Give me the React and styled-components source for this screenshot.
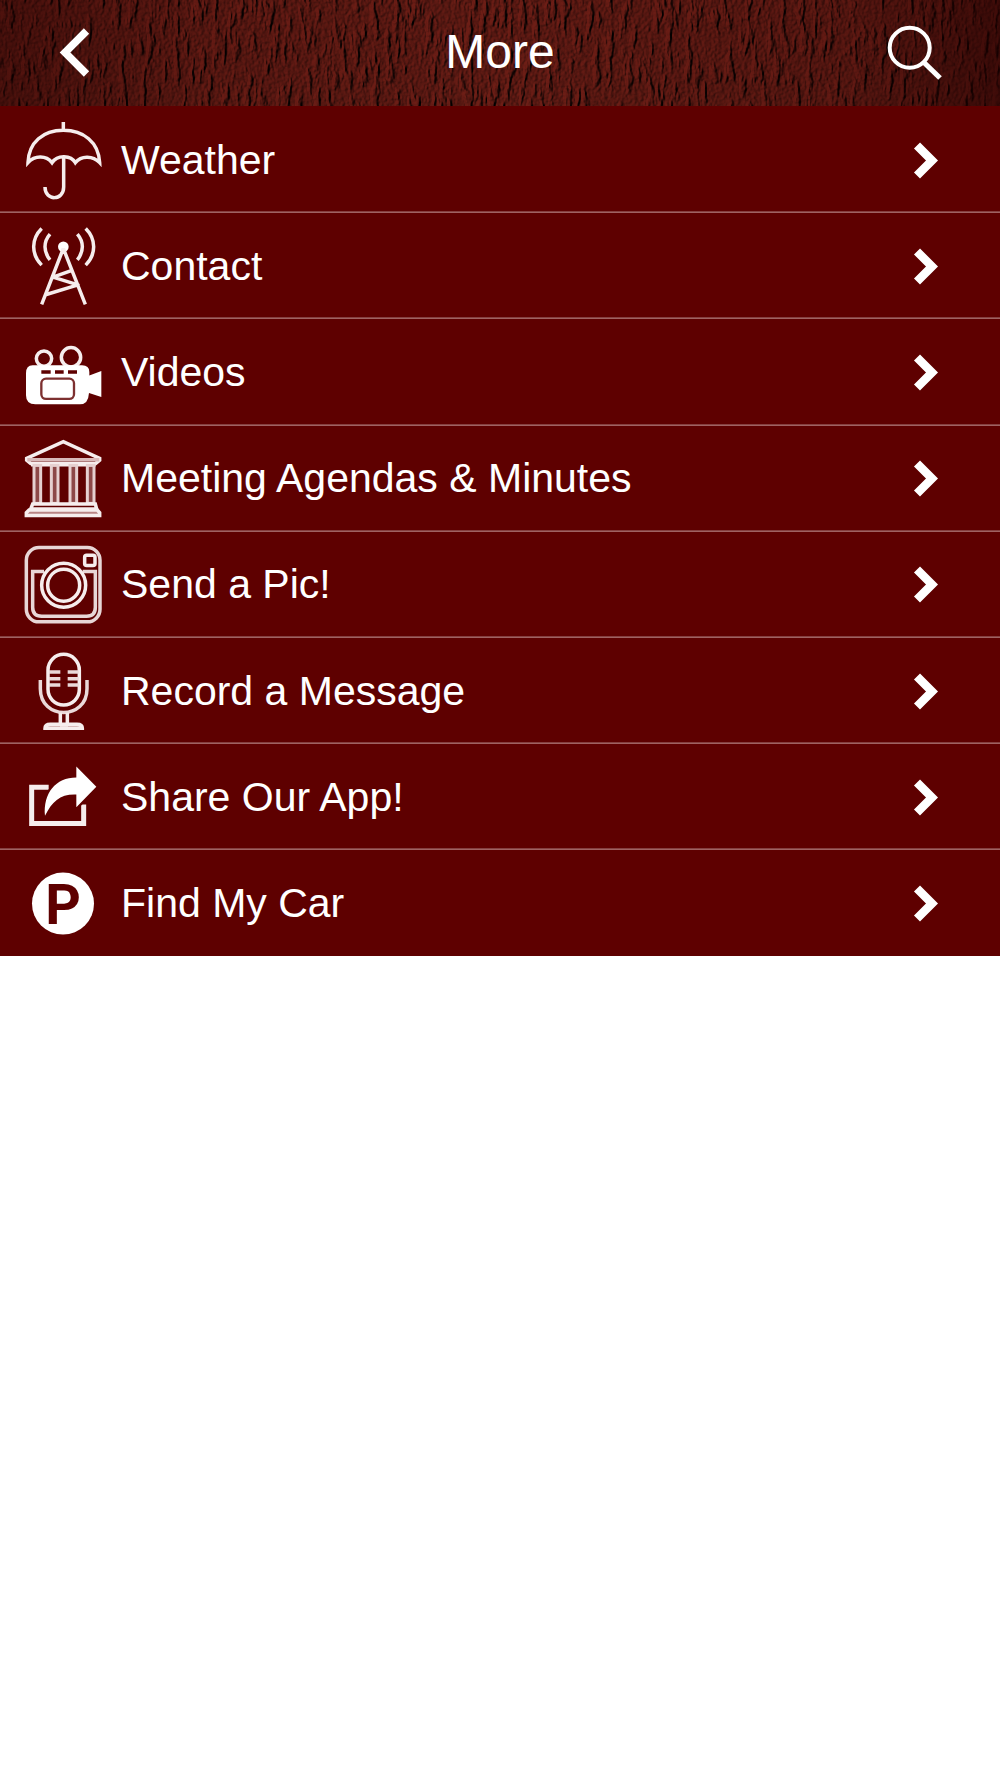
import React from "react";
import styled, { createGlobalStyle } from "styled-components";

const GlobalStyle = createGlobalStyle`
  body {
    margin: 0;
    background: #fff;
    font-family: "Liberation Sans", Arial, Helvetica, sans-serif;
  }
`;

const Page = styled.div`
  width: 100%;
  min-height: 100vh;
  background: #fff;
`;

const Header = styled.header`
  position: relative;
  display: flex;
  align-items: center;
  justify-content: space-between;
  height: 106px;
  padding: 0 56px;
  box-sizing: border-box;
  overflow: hidden;
  background: #4c110d;
`;

const Texture = styled.svg`
  position: absolute;
  inset: 0;
  width: 100%;
  height: 100%;
`;

const Title = styled.h1`
  position: relative;
  margin: 0;
  padding-bottom: 2px;
  color: #fff;
  font-size: 48px;
  font-weight: 400;
  line-height: 56px;
`;

const HeaderButton = styled.button`
  position: relative;
  display: flex;
  width: 60px;
  height: 60px;
  padding: 0;
  border: 0;
  background: none;

  svg {
    width: 60px;
    height: 60px;
  }
`;

const List = styled.ul`
  margin: 0;
  padding: 1px 0 0;
  list-style: none;
  background: #5e0000;
`;

const Row = styled.li`
  display: flex;
  align-items: center;
  height: 106.2px;
  padding: 0 60px 0 23px;
  box-sizing: border-box;
  border-bottom: 1px solid #a06262;
  box-shadow: inset 0 -1px 0 #853f3f;

  &:last-child {
    height: 105.6px;
    border-bottom: 0;
    box-shadow: none;
  }
`;

const RowIcon = styled.svg`
  flex: none;
  width: 80px;
  height: 80px;
  fill: none;
  stroke: #f6eded;
  stroke-width: 10.5;
`;

const Label = styled.span`
  flex: 1;
  padding-left: 18px;
  color: #fff;
  font-size: 41px;
  line-height: 48px;
  white-space: nowrap;
`;

const Chevron = styled.svg`
  flex: none;
  width: 27px;
  height: 40px;
  margin-top: 2px;
`;

const HeaderTexture = () => (
  <Texture aria-hidden="true">
    <defs>
      <filter id="plaster" x="0" y="0" width="100%" height="100%" colorInterpolationFilters="sRGB">
        <feTurbulence type="fractalNoise" baseFrequency="0.15 0.035" numOctaves="4" seed="8" />
        <feColorMatrix values="0 0 0 0 0  0 0 0 0 0  0 0 0 0 0  7 0 0 0 -3.8" result="ridges" />
        <feTurbulence type="fractalNoise" baseFrequency="0.3" numOctaves="2" seed="3" />
        <feColorMatrix values="0 0 0 0 0  0 0 0 0 0  0 0 0 0 0  1 0 0 0 0" result="grain" />
        <feComposite in="ridges" in2="grain" operator="arithmetic" k2="0.5" k3="0.5" />
        <feGaussianBlur stdDeviation="0.7" />
        <feDiffuseLighting surfaceScale="2.3" diffuseConstant="1.15" lightingColor="#601a13">
          <feDistantLight azimuth="200" elevation="52" />
        </feDiffuseLighting>
      </filter>
      <linearGradient id="shade">
        <stop offset="0" stopColor="#200" stopOpacity="0.4" />
        <stop offset="0.2" stopColor="#200" stopOpacity="0.1" />
        <stop offset="0.5" stopColor="#200" stopOpacity="0" />
        <stop offset="0.85" stopColor="#200" stopOpacity="0.15" />
        <stop offset="1" stopColor="#200" stopOpacity="0.6" />
      </linearGradient>
    </defs>
    <rect width="100%" height="100%" filter="url(#plaster)" />
    <rect width="100%" height="100%" fill="url(#shade)" />
  </Texture>
);

const Umbrella = () => (
  <RowIcon viewBox="69 40 240 240">
    <path d="M190 46v22M84 168C86 106 130 71 190 71s106 35 109 97c-20-21-55-23-73 0-13-22-53-25-70 0-18-23-52-22-72 0z" />
    <path d="M191 152v89c0 42-56 43-56 0" />
  </RowIcon>
);

const Tower = () => (
  <RowIcon viewBox="69 40.6 240 240">
    <circle cx="190" cy="103" r="16" fill="#fff" stroke="none" />
    <path d="M190 108l-65 168M190 108l66 168M218 173l-59 21 75 23-95 29" strokeLinejoin="round" />
    <path d="M125 48c-32 32-32 78 0 110M150 65c-20 23-20 53 0 77M232 65c20 23 20 53 0 77M257 48c32 32 32 78 0 110" />
  </RowIcon>
);

const LensFrame = styled.rect`
  stroke: #7d3030;
  stroke-width: 7;
`;

const Camera = () => (
  <RowIcon viewBox="69 41.2 240 240">
    <circle cx="132" cy="121" r="23" />
    <circle cx="213" cy="117" r="29" />
    <path
      d="M98 141h148q22 0 22 20v11l36-14v78l-37-12q-2 34-27 34H106q-28 0-28-27v-66q0-24 20-24z"
      fill="#fff"
      stroke="none"
    />
    <path d="M124 161h28M165 161h26M204 161h27" stroke="#5e0000" />
    <LensFrame x="124" y="181" width="98" height="61" rx="14" />
  </RowIcon>
);

const Column = styled.rect`
  fill: #8d4848;
  stroke: #e6d0d0;
  stroke-width: 9;
`;

const Building = () => (
  <RowIcon viewBox="69 41.8 240 240">
    <path d="M80 103L190 53l109 50v5l-12 10H92l-12-10z" />
    <path d="M82 107h216" stroke="#d9baba" />
    <path d="M93 122h194" />
    {[102, 154, 210, 262].map(x => (
      <Column key={x} x={x} y="124" width="20" height="114" />
    ))}
    <path d="M98 240h188l4 15H92z" />
    <path d="M87 258h205l7 8v8H79v-8z" fill="#b98585" />
  </RowIcon>
);

const PhotoCamera = () => (
  <RowIcon viewBox="69 42.4 240 240">
    <rect x="79" y="53" width="221" height="223" rx="38" stroke="#e8d6d6" />
    <path d="M132 125H98v107q0 27 27 27h135q26 0 26-27V125h-38" stroke="#e8d6d6" />
    <circle cx="191" cy="166" r="66" />
    <circle cx="191" cy="166" r="48" />
    <rect x="254" y="76" width="31" height="31" rx="6" />
  </RowIcon>
);

const Microphone = () => (
  <RowIcon viewBox="69 43 240 240">
    <rect x="144" y="53" width="94" height="152" rx="47" />
    <path d="M147 106h34M147 126h34M147 145h34M203 106h33M203 126h33M203 145h33" stroke="#ead9d9" />
    <path d="M121 130v26c0 95 140 95 140 0v-26" stroke="#ead9d9" />
    <path d="M181 228v38M202 228v38" />
    <path d="M135 275c0-11 8-12 16-12h80c10 0 16 4 16 12z" fill="#b98585" />
    <path d="M180 265h24" />
  </RowIcon>
);

const ShareBox = styled.path`
  stroke-width: 15;
`;

const ShareArrow = styled.path`
  fill: #fff;
  stroke: #5e0000;
  stroke-width: 14;
  stroke-linejoin: round;
  paint-order: stroke;
`;

const Share = () => (
  <RowIcon viewBox="69 43.6 240 240">
    <ShareBox d="M146 134H95v109h156v-57" />
    <ShareArrow d="M229 72l60 61-60 61v-38c-48-2-72 20-94 64-6-68 32-115 94-115z" />
  </RowIcon>
);

const ParkingLetter = styled.text`
  fill: #5e0000;
  stroke: none;
  font-family: Roboto, "Liberation Sans", sans-serif;
  font-size: 166px;
  font-weight: 700;
`;

const Parking = () => (
  <RowIcon viewBox="69 44.2 240 240">
    <circle cx="189" cy="166" r="93" fill="#fff" stroke="none" />
    <ParkingLetter x="136" y="226">
      P
    </ParkingLetter>
  </RowIcon>
);

const items = [
  { label: "Weather", icon: Umbrella },
  { label: "Contact", icon: Tower },
  { label: "Videos", icon: Camera },
  { label: "Meeting Agendas & Minutes", icon: Building },
  { label: "Send a Pic!", icon: PhotoCamera },
  { label: "Record a Message", icon: Microphone },
  { label: "Share Our App!", icon: Share },
  { label: "Find My Car", icon: Parking }
];

export default function App() {
  return (
    <Page>
      <GlobalStyle />
      <Header>
        <HeaderTexture />
        <HeaderButton aria-label="Back">
          <svg viewBox="0 0 60 60" fill="none" stroke="#fff" strokeWidth="7.5">
            <path d="M30.500 8L9 29.500l21.500 21.500" />
          </svg>
        </HeaderButton>
        <Title>More</Title>
        <HeaderButton aria-label="Search">
          <svg viewBox="0 0 60 60" fill="none" stroke="#fff" strokeWidth="4">
            <circle cx="25.700" cy="24.700" r="20" />
            <path d="M40 39.500L56 55" strokeWidth="5.200" />
          </svg>
        </HeaderButton>
      </Header>
      <List>
        {items.map(({ label, icon: Icon }) => (
          <Row key={label}>
            <Icon />
            <Label>{label}</Label>
            <Chevron viewBox="0 0 27 40" fill="none" stroke="#fff" strokeWidth="8.5">
              <path d="M4 4.500L19 19.500L4 34.500" />
            </Chevron>
          </Row>
        ))}
      </List>
    </Page>
  );
}
